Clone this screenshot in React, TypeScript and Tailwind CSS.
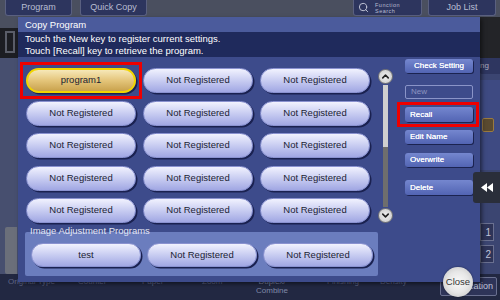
import { ChevronUp, ChevronDown, Search } from 'lucide-react';
import clsx from 'clsx';

const programs = [
  'program1', 'Not Registered', 'Not Registered',
  'Not Registered', 'Not Registered', 'Not Registered',
  'Not Registered', 'Not Registered', 'Not Registered',
  'Not Registered', 'Not Registered', 'Not Registered',
  'Not Registered', 'Not Registered', 'Not Registered',
];

const adjustPrograms = ['test', 'Not Registered', 'Not Registered'];

function Pill({ label, selected, className }: { label: string; selected?: boolean; className?: string }) {
  return (
    <div
      className={clsx(
        'flex items-center justify-center rounded-full text-[9.5px] text-[#1b1d33] shadow-[1.5px_1.5px_0_#1a2150]',
        selected
          ? 'border-2 border-[#f2d500] bg-linear-to-b from-[#f6e8b8] via-[#e4c57a] to-[#c9a24c]'
          : 'border border-[#8a92d0] bg-linear-to-b from-[#f1f2fe] to-[#a1a7e3]',
        className
      )}
    >
      {label}
    </div>
  );
}

function SideButton({ label, center, className }: { label: string; center?: boolean; className?: string }) {
  return (
    <div
      className={clsx(
        'flex h-[14px] items-center rounded-[3px] bg-linear-to-b from-[#7587cf] to-[#5264b3] text-[8px] text-white shadow-[1px_1px_0_#1b2350] [text-shadow:0_0_0.4px_#fff]',
        center ? 'justify-center' : 'pl-[5px]',
        className
      )}
    >
      {label}
    </div>
  );
}

function ScrollCircle({ up }: { up?: boolean }) {
  return (
    <div className="flex h-[15px] w-[15px] items-center justify-center rounded-full border border-[#777] bg-radial from-[#f4f4f4] to-[#c4c4c4]">
      {up ? (
        <ChevronUp size={11} strokeWidth={3.5} color="#222" />
      ) : (
        <ChevronDown size={11} strokeWidth={3.5} color="#222" />
      )}
    </div>
  );
}

function TopTab({ children, className }: { children: React.ReactNode; className?: string }) {
  return (
    <div
      className={clsx(
        'flex h-[16px] items-center justify-center rounded-b-[3px] border border-t-0 border-[#5a6080] bg-[#2d355e] text-[9px] text-[#b9bdd2]',
        className
      )}
    >
      {children}
    </div>
  );
}

export default function App() {
  return (
    <div className="relative h-[300px] w-[500px] overflow-hidden bg-[#464e6e] font-['Liberation_Sans',Arial,sans-serif]">
      {/* underlying copy screen */}
      <div className="flex h-full flex-col">
        <div className="flex h-[17px] shrink-0 bg-[#4a4f5f]">
          <TopTab className="ml-[5px] w-[67px]">Program</TopTab>
          <TopTab className="ml-[8px] w-[67px]">Quick Copy</TopTab>
          <TopTab className="ml-auto w-[69px] justify-start gap-[6px] pl-[4px]">
            <Search size={11} strokeWidth={2} color="#c8ccdc" />
            <div className="text-[5.5px] leading-[6px] tracking-[0.5px]">
              Function
              <br />
              Search
            </div>
          </TopTab>
          <TopTab className="ml-[6px] mr-[4px] w-[68px]">Job List</TopTab>
        </div>

        <div className="flex flex-1">
          <div className="flex w-[18px] flex-col">
            <div className="h-[11px] bg-[#4a4f5f]" />
            <div className="h-[30px] bg-[#1c1d22] pl-[5px] pt-[3px]">
              <div className="h-[22px] w-[10px] border-2 border-[#5a5d68]" />
            </div>
            <div className="flex flex-1 items-end bg-[#474f6f] pl-[5px]">
              <div className="h-[47px] w-[12px] rounded-l-[2px] bg-[#6b6f7a]" />
            </div>
          </div>
          <div className="flex-1 bg-[#2a3052]" />
          <div className="flex w-[20px] flex-col bg-[#3b4571]">
            <div className="h-[41px] bg-[#232428]" />
            <div className="h-[16px] rounded-l-[2px] bg-[#2e3660] text-[8px] leading-[16px] text-[#aab]">ng</div>
            <div className="mt-[6px] flex h-[90px] items-center bg-[#3e4a82] pl-[2px]">
              <div className="h-[14px] w-[12px] rounded-[2px] border border-[#9a7a40] bg-[#5a4a30]" />
            </div>
            <div className="mt-[53px] flex h-[18px] w-[14px] items-center justify-end border border-[#6a7090] bg-[#2e3458] pr-[2px] text-[10px] text-[#c0c4d8]">
              1
            </div>
            <div className="mt-[4px] flex h-[18px] w-[14px] items-center justify-end border border-[#6a7090] bg-[#2e3458] pr-[2px] text-[10px] text-[#c0c4d8]">
              2
            </div>
          </div>
        </div>

        <div className="relative flex h-[26px] shrink-0 bg-[#222842] text-[8px] leading-[9px] text-[#5f6586]">
          <div className="ml-[8px] mt-[3px] w-[70px]">Original Type</div>
          <div className="mt-[3px] w-[64px]">Counter</div>
          <div className="mt-[3px] w-[60px]">Paper</div>
          <div className="mt-[3px] w-[30px]">Zoom</div>
          <div className="mt-[3px] w-[80px] text-center text-[#8088a8]">
            Duplex/
            <br />
            Combine
          </div>
          <div className="ml-[15px] mt-[3px] w-[53px]">Finishing</div>
          <div className="mt-[3px] w-[40px]">Density</div>
          <div className="ml-auto mr-[3px] mt-[3px] flex h-[19px] w-[57px] items-center justify-end rounded-[2px] border border-[#6a7090] bg-[#2e3458] pr-[3px] text-[9px] text-[#c0c4d8]">
            Application
          </div>
        </div>
      </div>

      {/* Copy Program dialog */}
      <div className="absolute left-[18px] top-[17px] flex h-[265px] w-[462px] flex-col bg-[#3d4b8b] shadow-[2px_2px_4px_rgba(0,0,0,0.5)]">
        <div className="h-[15px] bg-[#4b5b9c] pl-[7px] text-[9.5px] leading-[15px] text-white">Copy Program</div>
        <div className="h-[25px] bg-[#1f2a5c] pl-[7px] pt-[1px] text-[9.5px] leading-[12px] text-white">
          <div>Touch the New key to register current settings.</div>
          <div>Touch [Recall] key to retrieve the program.</div>
        </div>

        <div className="flex flex-1 pl-[7px]">
          <div className="flex w-[380px] flex-col pt-[11px]">
            <div className="flex">
              <div className="ml-[1px] grid w-[344px] grid-cols-3 gap-x-[7px] gap-y-[7.5px]">
                {programs.map((p, i) =>
                  i === 0 ? (
                    <div key={i} className="relative">
                      <Pill label={p} selected className="h-[25px]" />
                      <div className="absolute -inset-[6px] border-[3px] border-[#ee0000]" />
                    </div>
                  ) : (
                    <Pill key={i} label={p} className="h-[25px]" />
                  )
                )}
              </div>
              <div className="ml-[7px] flex w-[16px] flex-col items-center pt-[1px]">
                <ScrollCircle up />
                <div className="mt-[1px] flex h-[122px] w-[5px] flex-col">
                  <div className="h-[62px] bg-[#cfcfcf]" />
                  <div className="flex-1 bg-[#6e6e6e]" />
                </div>
                <div className="mt-[1px]">
                  <ScrollCircle />
                </div>
              </div>
            </div>

            <div className="relative z-10 -mb-[4px] ml-[5px] mt-[3px] text-[9.5px] leading-[10px] text-[#e4e6f4]">
              Image Adjustment Programs
            </div>
            <div className="flex h-[44px] w-[353px] gap-[6px] rounded-[2px] bg-[#6b7dbe] pl-[6px] pt-[11px]">
              {adjustPrograms.map((p, i) => (
                <Pill key={i} label={p} className="h-[24px] w-[110px]" />
              ))}
            </div>
          </div>

          <div className="flex w-[68px] flex-col pt-[2px]">
            <SideButton label="Check Setting" center />
            <div className="mt-[12px] flex h-[14px] items-center rounded-[2px] border border-[#8a94c8] pl-[5px] text-[8px] text-[#8d95c0]">
              New
            </div>
            <div className="relative mt-[8px]">
              <SideButton label="Recall" className="h-[15px]" />
              <div className="absolute -bottom-[5px] -left-[8px] -right-[6px] -top-[5px] border-[3px] border-[#ee0000]" />
            </div>
            <SideButton label="Edit Name" className="mt-[8px]" />
            <SideButton label="Overwrite" className="mt-[9px]" />
            <SideButton label="Delete" className="mt-[13px] h-[15px]" />
          </div>
        </div>
      </div>

      {/* collapse tab */}
      <div className="absolute left-[473px] top-[172px] flex h-[31px] w-[27px] items-center justify-center rounded-l-[3px] bg-[#2a2e3a]">
        <svg width="12" height="9" viewBox="0 0 12 9">
          <polygon points="6,0 6,9 0,4.5" fill="#fff" />
          <polygon points="12,0 12,9 6,4.5" fill="#fff" />
        </svg>
      </div>

      {/* close */}
      <div className="absolute left-[443px] top-[267px] flex h-[30px] w-[30px] items-center justify-center rounded-full bg-radial from-[#fafafa] via-[#e6e6e6] to-[#bdbdbd] text-[9.5px] text-[#333] shadow-[0_0_2px_rgba(0,0,0,0.5)]">
        Close
      </div>
    </div>
  );
}
